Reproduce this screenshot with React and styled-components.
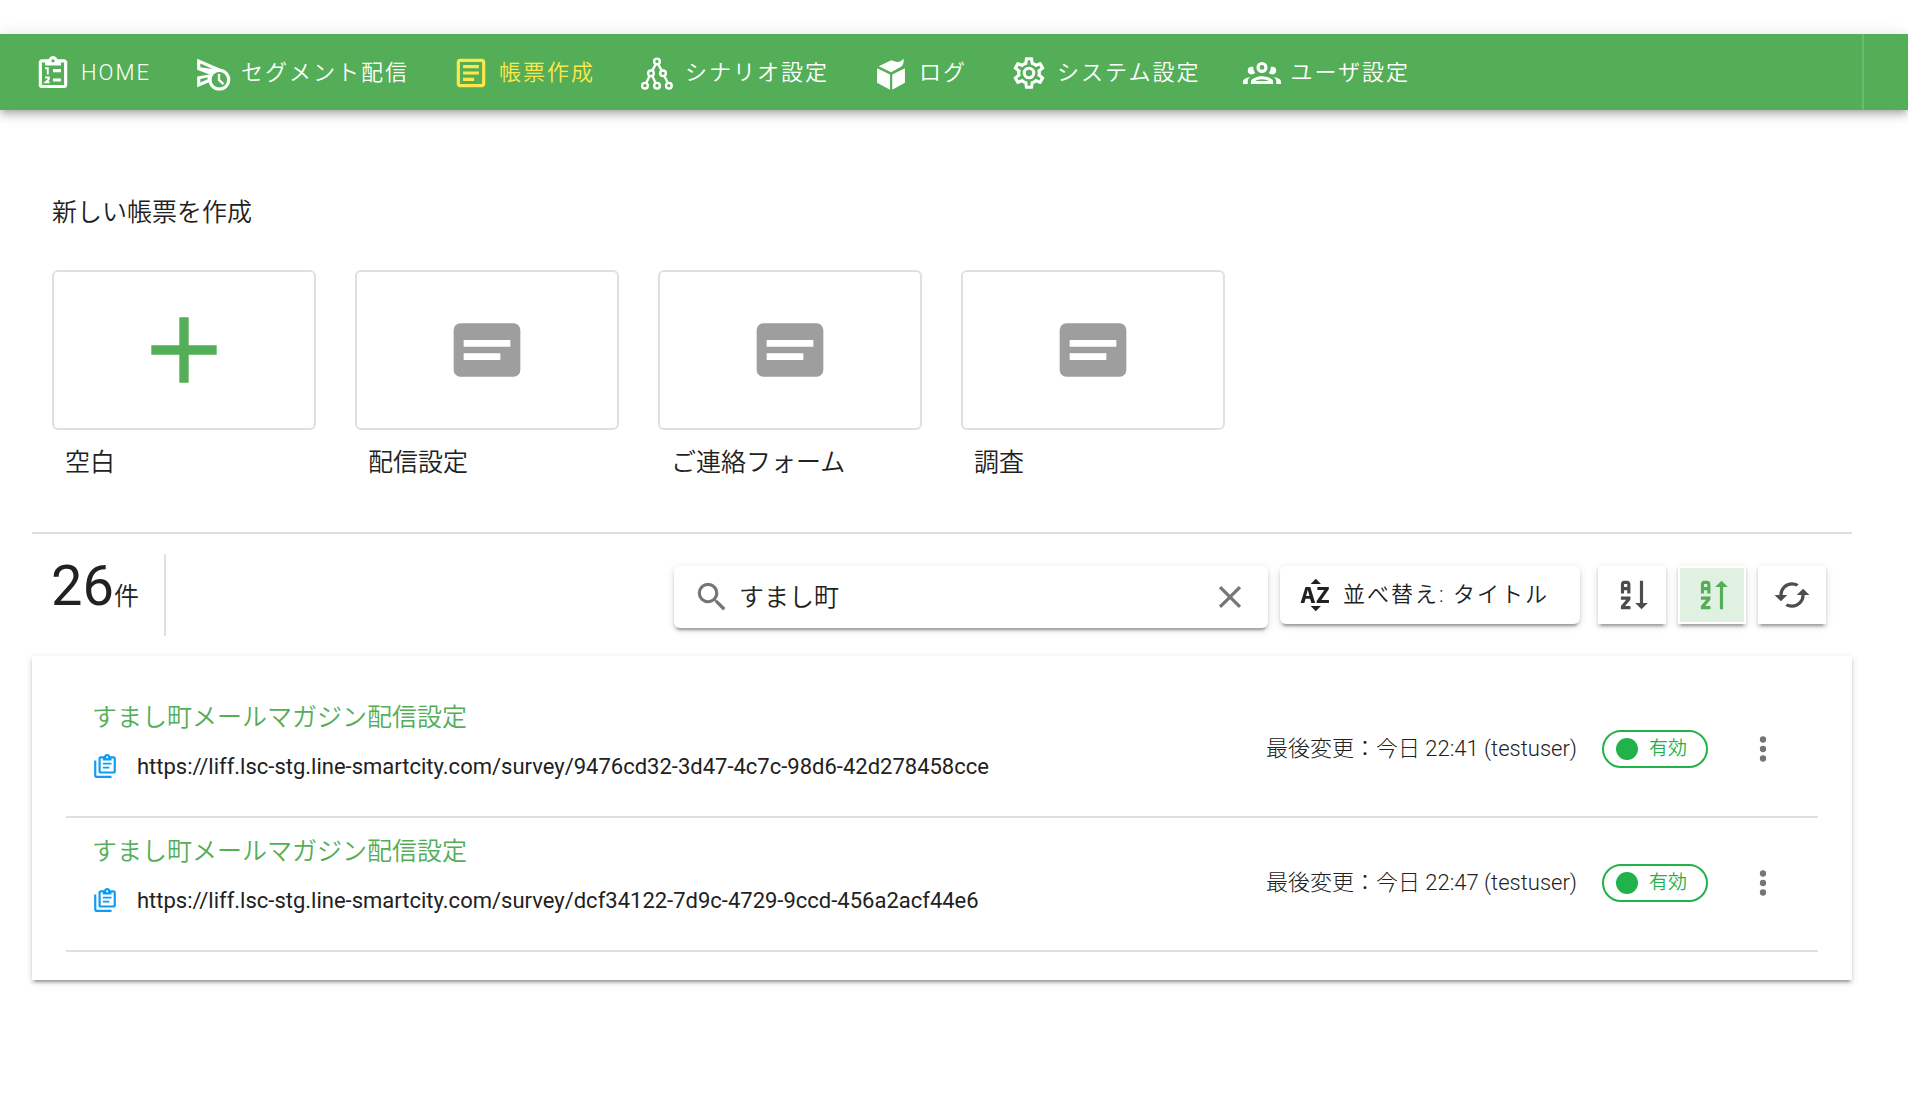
import React, { useState } from 'react';
import styled, { createGlobalStyle, css } from 'styled-components';

const green = '#53ae57';
const ink = '#212121';
const line = '#e0e0e0';
const raised =
  '0 5px 2px -3px rgba(0,0,0,.2), 0 3px 3px 0 rgba(0,0,0,.14), 0 2px 8px 0 rgba(0,0,0,.12)';

const GlobalStyle = createGlobalStyle`
  *, *::before, *::after { box-sizing: border-box; }
  body {
    margin: 0;
    background: #fff;
    color: ${ink};
    font-family: Roboto, "Noto Sans CJK JP", sans-serif;
    font-size: 22px;
  }
  h1, h2, p, ul { margin: 0; padding: 0; }
  ul { list-style: none; }
  button, input { font: inherit; color: inherit; }
  button { border: 0; padding: 0; background: none; cursor: pointer; }
  a { color: inherit; text-decoration: none; }
`;

/* ---------- icons ---------- */

const Svg = styled.svg`
  display: block;
  flex: none;
  width: ${(p) => p.$size}px;
  height: ${(p) => p.$size}px;
  fill: currentColor;
`;

const Icon = ({ size = 38, children }) => (
  <Svg viewBox="0 0 24 24" $size={size} aria-hidden="true">
    {children}
  </Svg>
);

const HomeIcon = () => (
  <Icon>
    <path
      fillRule="evenodd"
      d="M19 3.3H14.8C14.4 2 13.3 1.2 12 1.2S9.6 2 9.2 3.3H5C3.9 3.3 3 4.2 3 5.3V19.5C3 20.6 3.9 21.5 5 21.5H19C20.1 21.5 21 20.6 21 19.5V5.3C21 4.2 20.1 3.3 19 3.3ZM12 3.3A1 1 0 1 1 12 5.3A1 1 0 1 1 12 3.3ZM7 5.3V7.3H17V5.3H19V19.5H5V5.3H7Z"
    />
    <path d="M12 9.5H17V11.5H12ZM12 15.4H17V17.4H12Z" />
    <path
      d="M7 9H8.7V12.9M7 14.8H9.3V16L7.3 17.8H9.8"
      fill="none"
      stroke="currentColor"
      strokeWidth="1.2"
    />
  </Icon>
);

const SendClockIcon = () => (
  <Icon>
    <path
      fillRule="evenodd"
      d="M2 3L18.5 10.1L9.6 13L2 14.2V21L9.5 17.8L9.8 13L2 10V3ZM4 6V8.3L9.2 9.2L11.8 9.4ZM4 15.8V18L8.6 16V14.9Z"
    />
    <circle cx="16" cy="16.2" r="6.9" />
    <circle cx="16" cy="16.2" r="4.9" fill={green} />
    <path d="M15.8 12.6V16.4L18.6 19" fill="none" stroke="currentColor" strokeWidth="1.5" />
  </Icon>
);

const FormIcon = () => (
  <Icon>
    <path d="M5 3C3.89 3 3 3.89 3 5V19C3 20.11 3.89 21 5 21H19C20.11 21 21 20.11 21 19V5C21 3.89 20.11 3 19 3H5M5 5H19V19H5V5M7 7V9H17V7H7M7 11V13H17V11H7M7 15V17H14V15H7Z" />
  </Icon>
);

const TreeIcon = () => (
  <Icon>
    <g fill="none" stroke="currentColor" strokeWidth="1.5">
      <path d="M11.2 6.4L9 10.6M12.8 6.4L15 10.6M7.4 13.8L5.2 18.3M9 13.8L11.1 18.3M16.6 13.8L18.8 18.3" />
      <circle cx="12" cy="4.7" r="1.8" />
      <circle cx="8.2" cy="12.2" r="1.8" />
      <circle cx="15.8" cy="12.2" r="1.8" />
      <circle cx="4.4" cy="20" r="1.8" />
      <circle cx="12" cy="20" r="1.8" />
      <circle cx="19.5" cy="20" r="1.8" />
    </g>
  </Icon>
);

const BoxIcon = () => (
  <Icon>
    <path d="M3.2 9L11.4 12.9V22.6L3.2 18.2ZM20.8 9L12.8 12.9V22.6L20.8 18.2ZM4.2 7.8L12.2 4C14 4.5 15 5.2 16.5 5C18 4.8 19.2 4 20 3C20.1 5.2 19.8 6.6 18.6 7.9L12.1 11.6Z" />
  </Icon>
);

const CogIcon = () => (
  <Icon>
    <path d="M12,8A4,4 0 0,1 16,12A4,4 0 0,1 12,16A4,4 0 0,1 8,12A4,4 0 0,1 12,8M12,10A2,2 0 0,0 10,12A2,2 0 0,0 12,14A2,2 0 0,0 14,12A2,2 0 0,0 12,10M10,22C9.75,22 9.54,21.82 9.5,21.58L9.13,18.93C8.5,18.68 7.96,18.34 7.44,17.94L4.95,18.95C4.73,19.03 4.46,18.95 4.34,18.73L2.34,15.27C2.21,15.05 2.27,14.78 2.46,14.63L4.57,12.97L4.5,12L4.57,11L2.46,9.37C2.27,9.22 2.21,8.95 2.34,8.73L4.34,5.27C4.46,5.05 4.73,4.96 4.95,5.05L7.44,6.05C7.96,5.66 8.5,5.32 9.13,5.07L9.5,2.42C9.54,2.18 9.75,2 10,2H14C14.25,2 14.46,2.18 14.5,2.42L14.87,5.07C15.5,5.32 16.04,5.66 16.56,6.05L19.05,5.05C19.27,4.96 19.54,5.05 19.66,5.27L21.66,8.73C21.79,8.95 21.73,9.22 21.54,9.37L19.43,11L19.5,12L19.43,13L21.54,14.63C21.73,14.78 21.79,15.05 21.66,15.27L19.66,18.73C19.54,18.95 19.27,19.04 19.05,18.95L16.56,17.95C16.04,18.34 15.5,18.68 14.87,18.93L14.5,21.58C14.46,21.82 14.25,22 14,22H10M11.25,4L10.88,6.61C9.68,6.86 8.62,7.5 7.85,8.39L5.44,7.35L4.69,8.65L6.8,10.2C6.4,11.37 6.4,12.64 6.8,13.8L4.68,15.36L5.43,16.66L7.86,15.62C8.63,16.5 9.68,17.14 10.87,17.38L11.24,20H12.76L13.13,17.39C14.32,17.14 15.37,16.5 16.14,15.62L18.57,16.66L19.32,15.36L17.2,13.81C17.6,12.64 17.6,11.37 17.2,10.2L19.31,8.65L18.56,7.35L16.15,8.39C15.38,7.5 14.32,6.86 13.12,6.62L12.75,4H11.25Z" />
  </Icon>
);

const GroupIcon = () => (
  <Icon>
    <path d="M12,5A3.5,3.5 0 0,0 8.5,8.5A3.5,3.5 0 0,0 12,12A3.5,3.5 0 0,0 15.5,8.5A3.5,3.5 0 0,0 12,5M12,7A1.5,1.5 0 0,1 13.5,8.5A1.5,1.5 0 0,1 12,10A1.5,1.5 0 0,1 10.5,8.5A1.5,1.5 0 0,1 12,7M5.5,8A2.5,2.5 0 0,0 3,10.5C3,11.44 3.53,12.25 4.29,12.68C4.65,12.88 5.06,13 5.5,13C5.94,13 6.35,12.88 6.71,12.68C7.08,12.47 7.39,12.17 7.62,11.81C6.89,10.86 6.5,9.7 6.5,8.5C6.5,8.41 6.5,8.31 6.5,8.22C6.2,8.08 5.86,8 5.5,8M18.5,8C18.14,8 17.8,8.08 17.5,8.22C17.5,8.31 17.5,8.41 17.5,8.5C17.5,9.7 17.11,10.86 16.38,11.81C16.5,12 16.63,12.15 16.78,12.3C16.94,12.45 17.1,12.58 17.29,12.68C17.65,12.88 18.06,13 18.5,13C18.94,13 19.35,12.88 19.71,12.68C20.47,12.25 21,11.44 21,10.5A2.5,2.5 0 0,0 18.5,8M12,14C9.66,14 5,15.17 5,17.5V19H19V17.5C19,15.17 14.34,14 12,14M4.71,14.55C2.78,14.78 0,15.76 0,17.5V19H3V17.07C3,16.06 3.69,15.22 4.71,14.55M19.29,14.55C20.31,15.22 21,16.06 21,17.07V19H24V17.5C24,15.76 21.22,14.78 19.29,14.55M12,16C13.53,16 15.24,16.5 16.23,17H7.77C8.76,16.5 10.47,16 12,16Z" />
  </Icon>
);

const PlusIcon = () => (
  <Icon size={112}>
    <path d="M19 13H13V19H11V13H5V11H11V5H13V11H19V13Z" />
  </Icon>
);

const CardTextIcon = () => (
  <Icon size={80}>
    <path d="M20 4H4A2 2 0 0 0 2 6V18A2 2 0 0 0 4 20H20A2 2 0 0 0 22 18V6A2 2 0 0 0 20 4M5 13H16V15H5M5 9H19V11H5" />
  </Icon>
);

const SearchIcon = () => (
  <Icon>
    <path d="M9.5,3A6.5,6.5 0 0,1 16,9.5C16,11.11 15.41,12.59 14.44,13.73L14.71,14H15.5L20.5,19L19,20.5L14,15.5V14.71L13.73,14.44C12.59,15.41 11.11,16 9.5,16A6.5,6.5 0 0,1 3,9.5A6.5,6.5 0 0,1 9.5,3M9.5,5C7,5 5,7 5,9.5C5,12 7,14 9.5,14C12,14 14,12 14,9.5C14,7 12,5 9.5,5Z" />
  </Icon>
);

const CloseIcon = () => (
  <Icon>
    <path d="M19,6.41L17.59,5L12,10.59L6.41,5L5,6.41L10.59,12L5,17.59L6.41,19L12,13.41L17.59,19L19,17.59L13.41,12L19,6.41Z" />
  </Icon>
);

const SortKeyIcon = () => (
  <Icon>
    <path d="M9.25,5L12.5,1.75L15.75,5H9.25M15.75,19L12.5,22.25L9.25,19H15.75M8.89,14.3H6L5.28,17H2.91L6,7H9L12.13,17H9.67L8.89,14.3M6.33,12.68H8.56L7.93,10.56L7.67,9.59L7.42,8.63H7.39L7.17,9.6L6.93,10.58L6.33,12.68M13.05,17V15.74L17.8,8.97V8.91H13.5V7H20.73V8.34L16.09,15V15.08H20.8V17H13.05Z" />
  </Icon>
);

const SortAscIcon = () => (
  <Icon>
    <path d="M19 17H22L18 21L14 17H17V3H19M11 13V15L7.67 19H11V21H5V19L8.33 15H5V13M9 3H7C5.9 3 5 3.9 5 5V11H7V9H9V11H11V5C11 3.9 10.11 3 9 3M9 7H7V5H9Z" />
  </Icon>
);

const SortDescIcon = () => (
  <Icon>
    <path d="M19 7H22L18 3L14 7H17V21H19M11 13V15L7.67 19H11V21H5V19L8.33 15H5V13M9 3H7C5.9 3 5 3.9 5 5V11H7V9H9V11H11V5C11 3.9 10.11 3 9 3M9 7H7V5H9Z" />
  </Icon>
);

const RefreshIcon = () => (
  <Icon>
    <path d="M19,8L15,12H18A6,6 0 0,1 12,18C11,18 10.03,17.75 9.2,17.3L7.74,18.76C8.97,19.54 10.43,20 12,20A8,8 0 0,0 20,12H23M6,12A6,6 0 0,1 12,6C13,6 13.97,6.25 14.8,6.7L16.26,5.24C15.03,4.46 13.57,4 12,4A8,8 0 0,0 4,12H1L5,16L9,12" />
  </Icon>
);

const CopyIcon = () => (
  <Icon size={26}>
    <path
      fillRule="evenodd"
      d="M4 7V21H18V23H4C2.9 23 2 22.1 2 21V7H4ZM20 3H16.8C16.4 1.8 15.3 1 14 1S11.6 1.8 11.2 3H8C6.9 3 6 3.9 6 5V17C6 18.1 6.9 19 8 19H20C21.1 19 22 18.1 22 17V5C22 3.9 21.1 3 20 3ZM14 3A1 1 0 1 1 14 5A1 1 0 1 1 14 3ZM10 5V7H18V5H20V17H8V5H10Z"
    />
    <path d="M10 9H18V10.6H10ZM10 12.6H16V14.2H10Z" />
  </Icon>
);

const DotsIcon = () => (
  <Icon>
    <path d="M12,16A2,2 0 0,1 14,18A2,2 0 0,1 12,20A2,2 0 0,1 10,18A2,2 0 0,1 12,16M12,10A2,2 0 0,1 14,12A2,2 0 0,1 12,14A2,2 0 0,1 10,12A2,2 0 0,1 12,10M12,4A2,2 0 0,1 14,6A2,2 0 0,1 12,8A2,2 0 0,1 10,6A2,2 0 0,1 12,4Z" />
  </Icon>
);

/* ---------- header ---------- */

const Header = styled.header`
  display: flex;
  justify-content: space-between;
  height: 76px;
  margin-top: 34px;
  background: ${green};
  color: #fff;
  box-shadow: 0 3px 6px -2px rgba(0,0,0,.2), 0 6px 8px 0 rgba(0,0,0,.14),
    0 2px 16px 0 rgba(0,0,0,.12);
`;

const Nav = styled.nav`
  display: flex;
  align-items: center;
  gap: 43px;
  padding: 2px 0 0 34px;
`;

const NavLink = styled.a`
  display: flex;
  align-items: center;
  gap: 9px;
  color: ${(p) => (p.$active ? '#fde74c' : '#fff')};
  font-weight: 350;
  letter-spacing: 2px;
  line-height: 32px;
  white-space: nowrap;
`;

const HeaderEnd = styled.div`
  width: 46px;
  border-left: 2px solid rgba(255,255,255,.15);
`;

/* ---------- templates ---------- */

const Main = styled.main`
  padding: 83px 56px 40px 32px;
`;

const Templates = styled.section`
  padding: 0 20px 49px;
  border-bottom: 2px solid ${line};
`;

const Heading = styled.h1`
  font-size: 25px;
  font-weight: 350;
  line-height: 40px;
`;

const TemplateList = styled.ul`
  display: flex;
  flex-wrap: wrap;
  gap: 39px;
  && { padding-top: 37px; }
`;

const Template = styled.button`
  display: flex;
  flex-direction: column;
  gap: 13px;
  width: 264px;
  text-align: left;
`;

const Tile = styled.span`
  display: flex;
  align-items: center;
  justify-content: center;
  width: 100%;
  height: 160px;
  border: 2px solid ${line};
  border-radius: 6px;
  color: ${(p) => (p.$primary ? green : '#9e9e9e')};
`;

const TileLabel = styled.span`
  padding-left: 13px;
  font-size: 25px;
  font-weight: 350;
  line-height: 40px;
`;

/* ---------- toolbar ---------- */

const Toolbar = styled.section`
  display: flex;
  justify-content: space-between;
  align-items: flex-start;
  padding: 20px 26px 20px 19px;
`;

const Count = styled.p`
  width: 115px;
  height: 82px;
  border-right: 2px solid ${line};
  font-size: 25px;
  font-weight: 350;
  line-height: 64px;
  white-space: nowrap;
`;

const CountNumber = styled.span`
  font-size: 56px;
  font-weight: 400;
`;

const Tools = styled.div`
  display: flex;
  align-items: flex-start;
  gap: 12px;
  padding-top: 12px;
`;

const Search = styled.label`
  display: flex;
  align-items: center;
  gap: 8px;
  width: 594px;
  height: 62px;
  padding: 0 19px;
  border-radius: 6px;
  color: #757575;
  background: #fff;
  box-shadow: ${raised};
`;

const SearchInput = styled.input`
  flex: 1;
  min-width: 0;
  padding: 0 0 4px;
  border: 0;
  outline: 0;
  background: none;
  color: ${ink};
  font-size: 25px;
  font-weight: 350;
`;

const SortButton = styled.button`
  display: flex;
  align-items: center;
  gap: 9px;
  width: 300px;
  height: 58px;
  margin-right: 6px;
  padding: 0 16px;
  border-radius: 6px;
  background: #fff;
  box-shadow: ${raised};
  font-weight: 350;
  letter-spacing: 2px;
  line-height: 32px;
  white-space: nowrap;
`;

const IconButton = styled.button`
  display: flex;
  align-items: center;
  justify-content: center;
  width: 68px;
  height: 58px;
  background: #fff;
  color: #4d4d4d;
  box-shadow: ${raised};
  ${(p) =>
    p.$active &&
    css`
      border: 2px solid #fff;
      background: #e0f1e1;
      color: ${green};
    `}
`;

/* ---------- survey list ---------- */

const Panel = styled.ul`
  && { padding: 28px 34px; }
  background: #fff;
  box-shadow: ${raised};
`;

const Row = styled.li`
  display: flex;
  align-items: center;
  justify-content: space-between;
  height: 134px;
  padding: 0 36px 0 26px;
  border-bottom: 2px solid ${line};
`;

const RowMain = styled.div`
  display: flex;
  flex-direction: column;
  gap: 8px;
  padding-bottom: 16px;
`;

const RowTitle = styled.a`
  color: ${green};
  font-size: 25px;
  font-weight: 350;
  line-height: 40px;
`;

const UrlLine = styled.div`
  display: flex;
  align-items: center;
  gap: 19px;
  height: 40px;
`;

const CopyButton = styled.button`
  color: #0d9bf3;
`;

const RowSide = styled.div`
  display: flex;
  align-items: center;
  padding-bottom: 2px;
  white-space: nowrap;
`;

const Changed = styled.p`
  padding-right: 25px;
  font-weight: 300;
  line-height: 32px;
`;

const Status = styled.span`
  display: flex;
  align-items: center;
  gap: 11px;
  width: 106px;
  height: 38px;
  margin-right: 36px;
  padding-left: 12px;
  border: 2px solid #22b24a;
  border-radius: 19px;
  color: #22b24a;
  font-size: 19px;
  font-weight: 350;
  line-height: 32px;
`;

const Dot = styled.span`
  width: 22px;
  height: 22px;
  border-radius: 50%;
  background: #22b24a;
`;

const MenuButton = styled.button`
  color: #757575;
`;

/* ---------- data ---------- */

const navItems = [
  { label: 'HOME', icon: HomeIcon },
  { label: 'セグメント配信', icon: SendClockIcon },
  { label: '帳票作成', icon: FormIcon, active: true },
  { label: 'シナリオ設定', icon: TreeIcon },
  { label: 'ログ', icon: BoxIcon },
  { label: 'システム設定', icon: CogIcon },
  { label: 'ユーザ設定', icon: GroupIcon },
];

const templates = ['空白', '配信設定', 'ご連絡フォーム', '調査'];

const surveys = [
  {
    title: 'すまし町メールマガジン配信設定',
    url: 'https://liff.lsc-stg.line-smartcity.com/survey/9476cd32-3d47-4c7c-98d6-42d278458cce',
    changed: '最後変更：今日 22:41 (testuser)',
  },
  {
    title: 'すまし町メールマガジン配信設定',
    url: 'https://liff.lsc-stg.line-smartcity.com/survey/dcf34122-7d9c-4729-9ccd-456a2acf44e6',
    changed: '最後変更：今日 22:47 (testuser)',
  },
];

export default function App() {
  const [query, setQuery] = useState('すまし町');

  return (
    <div lang="ja">
      <GlobalStyle />
      <Header>
        <Nav>
          {navItems.map(({ label, icon: ItemIcon, active }) => (
            <NavLink key={label} href="#" $active={active}>
              <ItemIcon />
              {label}
            </NavLink>
          ))}
        </Nav>
        <HeaderEnd />
      </Header>

      <Main>
        <Templates>
          <Heading>新しい帳票を作成</Heading>
          <TemplateList>
            {templates.map((name, i) => (
              <li key={name}>
                <Template type="button">
                  <Tile $primary={i === 0}>{i === 0 ? <PlusIcon /> : <CardTextIcon />}</Tile>
                  <TileLabel>{name}</TileLabel>
                </Template>
              </li>
            ))}
          </TemplateList>
        </Templates>

        <Toolbar>
          <Count>
            <CountNumber>26</CountNumber>件
          </Count>
          <Tools>
            <Search>
              <SearchIcon />
              <SearchInput
                type="text"
                aria-label="検索"
                value={query}
                onChange={(e) => setQuery(e.target.value)}
              />
              <button type="button" aria-label="クリア" onClick={() => setQuery('')}>
                <CloseIcon />
              </button>
            </Search>
            <SortButton type="button">
              <SortKeyIcon />
              並べ替え: タイトル
            </SortButton>
            <IconButton type="button" aria-label="昇順">
              <SortAscIcon />
            </IconButton>
            <IconButton type="button" aria-label="降順" $active>
              <SortDescIcon />
            </IconButton>
            <IconButton type="button" aria-label="更新">
              <RefreshIcon />
            </IconButton>
          </Tools>
        </Toolbar>

        <Panel>
          {surveys.map((s) => (
            <Row key={s.url}>
              <RowMain>
                <RowTitle href="#">{s.title}</RowTitle>
                <UrlLine>
                  <CopyButton type="button" aria-label="コピー">
                    <CopyIcon />
                  </CopyButton>
                  <span>{s.url}</span>
                </UrlLine>
              </RowMain>
              <RowSide>
                <Changed>{s.changed}</Changed>
                <Status>
                  <Dot />
                  有効
                </Status>
                <MenuButton type="button" aria-label="メニュー">
                  <DotsIcon />
                </MenuButton>
              </RowSide>
            </Row>
          ))}
        </Panel>
      </Main>
    </div>
  );
}
